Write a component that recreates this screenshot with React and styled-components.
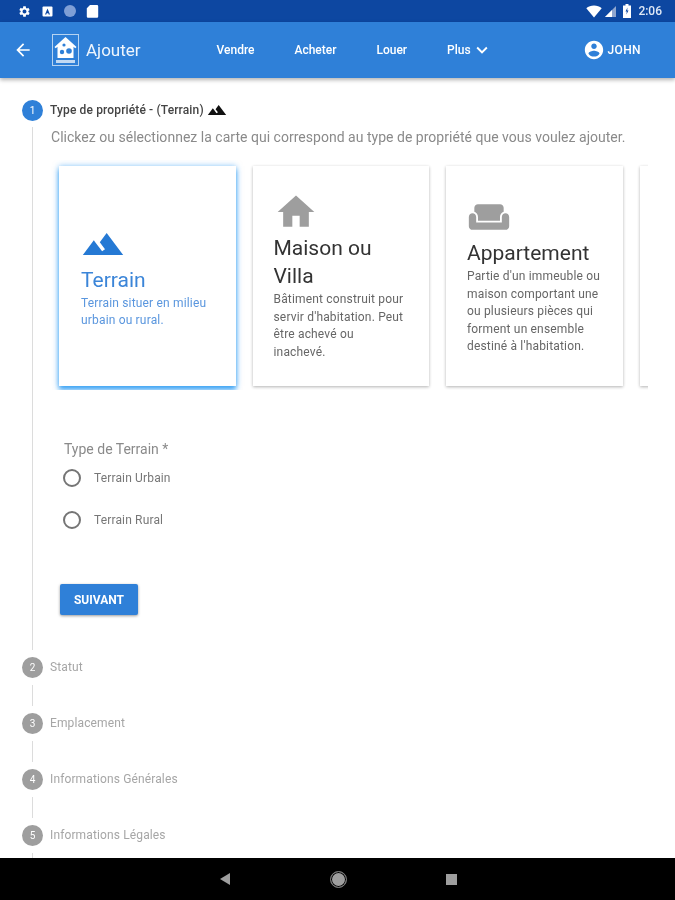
import React from 'react';
import styled, { createGlobalStyle } from 'styled-components';

const BLUE = '#2f80d8';

const GlobalStyle = createGlobalStyle`
	html, body {
		margin: 0;
		padding: 0;
		background: #fff;
	}
	* {
		box-sizing: border-box;
	}
`;

const cards = [
	{
		key: 'terrain',
		title: 'Terrain',
		text: 'Terrain situer en milieu urbain ou rural.',
		icon: 'M14 6l-3.75 5 2.85 3.8-1.6 1.2C9.81 13.75 7 10 7 10l-6 8h22L14 6z',
		selected: true,
	},
	{
		key: 'maison',
		title: 'Maison ou Villa',
		text: "Bâtiment construit pour servir d'habitation. Peut être achevé ou inachevé.",
		icon: 'M10 20v-6h4v6h5v-8h3L12 3 2 12h3v8z',
	},
	{
		key: 'appartement',
		title: 'Appartement',
		text: "Partie d'un immeuble ou maison comportant une ou plusieurs pièces qui forment un ensemble destiné à l'habitation.",
		icon: 'M21 10c-1.1 0-2 .9-2 2v3H5v-3c0-1.1-.9-2-2-2s-2 .9-2 2v5c0 1.1.9 2 2 2h18c1.1 0 2-.9 2-2v-5c0-1.1-.9-2-2-2zm-3-5H6c-1.1 0-2 .9-2 2v2.15c1.16.41 2 1.52 2 2.81V14h12v-2.03c0-1.3.84-2.4 2-2.81V7c0-1.1-.9-2-2-2z',
	},
];

const pendingSteps = ['Statut', 'Emplacement', 'Informations Générales', 'Informations Légales'];

export default function App() {
	return (
		<Screen>
			<GlobalStyle />
			{/* Android status bar */}
			<StatusBar>
				<StatusGroup>
					<svg width="13" height="13" viewBox="0 0 24 24" fill="#fff">
						<path d="M19.14 12.94c.04-.3.06-.61.06-.94 0-.32-.02-.64-.07-.94l2.03-1.58c.18-.14.23-.41.12-.61l-1.92-3.32c-.12-.22-.37-.29-.59-.22l-2.39.96c-.5-.38-1.03-.7-1.62-.94l-.36-2.54c-.04-.24-.24-.41-.48-.41h-3.84c-.24 0-.43.17-.47.41l-.36 2.54c-.59.24-1.13.57-1.62.94l-2.39-.96c-.22-.08-.47 0-.59.22L2.74 8.87c-.12.21-.08.47.12.61l2.03 1.58c-.05.3-.09.63-.09.94s.02.64.07.94l-2.03 1.58c-.18.14-.23.41-.12.61l1.92 3.32c.12.22.37.29.59.22l2.39-.96c.5.38 1.03.7 1.62.94l.36 2.54c.05.24.24.41.48.41h3.84c.24 0 .44-.17.47-.41l.36-2.54c.59-.24 1.13-.56 1.62-.94l2.39.96c.22.08.47 0 .59-.22l1.92-3.32c.12-.22.07-.47-.12-.61l-2.01-1.58zM12 15.6c-1.98 0-3.6-1.62-3.6-3.6s1.62-3.6 3.6-3.6 3.6 1.62 3.6 3.6-1.62 3.6-3.6 3.6z" />
					</svg>
					<svg width="13" height="13" viewBox="0 0 13 13">
						<rect x="1.5" y="1.5" width="10" height="10" rx="1" fill="#fff" />
						<path d="M6.5 3.5L4 9.5h1.3l.4-1.2h1.6l.4 1.2H9L6.5 3.5z" fill="#0d47a1" />
					</svg>
					<StatusDot />
					<svg width="13" height="14" viewBox="0 0 13 14" fill="#fff">
						<path d="M4 1h7a1.2 1.2 0 0 1 1.2 1.2v10.4A1.2 1.2 0 0 1 11 13.8H2A1.2 1.2 0 0 1 .8 12.6V4.2L4 1z" />
					</svg>
				</StatusGroup>
				<StatusGroup right>
					<svg width="16" height="13" viewBox="0 0 16 13" fill="#fff">
						<path d="M8 12.5L.3 3.2C2.4 1.4 5 .5 8 .5s5.6.9 7.700 2.7L8 12.500z" />
					</svg>
					<svg width="11" height="11" viewBox="0 0 11 11">
						<path d="M11 0v11H0L11 0z" fill="#8fa6cf" />
						<path d="M7 4v7H0l7-7z" fill="#fff" />
					</svg>
					<BatteryIcon width="8" height="14" viewBox="0 0 8 14">
						<path d="M2.5 0h3v1.500H8V14H0V1.500h2.500V0z" fill="#fff" />
						<path d="M4.500 3.500L2.500 7.500h1.300l-.4 3 2.100-4H4.200l.3-3z" fill="#0d47a1" />
					</BatteryIcon>
					<StatusTime>2:06</StatusTime>
				</StatusGroup>
			</StatusBar>

			{/* App bar */}
			<AppBar>
				<BackButton>
					<svg width="20" height="20" viewBox="0 0 24 24" fill="#fff">
						<path d="M20 11H7.83l5.59-5.59L12 4l-8 8 8 8 1.41-1.41L7.83 13H20v-2z" />
					</svg>
				</BackButton>
				<Logo>
					<svg width="25" height="30" viewBox="0 0 25 30">
						<path d="M12.500 2L1.500 12l1.200 1.300 1.800-1.600V23h16V11.700l1.800 1.600 1.200-1.300L12.500 2z" fill="#fff" />
						<circle cx="11" cy="10" r="1.600" fill={BLUE} />
						<circle cx="16" cy="16" r="2.800" fill={BLUE} />
						<circle cx="9" cy="17" r="2.200" fill={BLUE} />
						<rect x="3" y="25" width="19" height="3" fill="#fff" opacity="0.7" />
					</svg>
				</Logo>
				<PageTitle>Ajouter</PageTitle>
				<Nav>
					<NavItem>Vendre</NavItem>
					<NavItem>Acheter</NavItem>
					<NavItem>Louer</NavItem>
					<NavItem>
						Plus
						<svg width="22" height="22" viewBox="0 0 24 24" fill="#fff">
							<path d="M7.41 8.59L12 13.17l4.59-4.58L18 10l-6 6-6-6 1.41-1.41z" />
						</svg>
					</NavItem>
				</Nav>
				<UserMenu>
					<svg width="22" height="22" viewBox="0 0 24 24" fill="#fff">
						<path d="M12 2C6.48 2 2 6.48 2 12s4.48 10 10 10 10-4.48 10-10S17.52 2 12 2zm0 3c1.66 0 3 1.34 3 3s-1.34 3-3 3-3-1.34-3-3 1.34-3 3-3zm0 14.2c-2.5 0-4.71-1.28-6-3.22.03-1.99 4-3.08 6-3.08 1.99 0 5.97 1.09 6 3.08-1.29 1.94-3.5 3.22-6 3.22z" />
					</svg>
					JOHN
				</UserMenu>
			</AppBar>

			{/* Stepper */}
			<Main>
				<StepHeader>
					<StepNumber active>1</StepNumber>
					<ActiveLabel>
						Type de propriété - (Terrain)
						<svg width="20" height="20" viewBox="0 0 24 24" fill="#111">
							<path d={cards[0].icon} />
						</svg>
					</ActiveLabel>
				</StepHeader>
				<StepBody>
					<Intro>Clickez ou sélectionnez la carte qui correspond au type de propriété que vous voulez ajouter.</Intro>
					<CardRow>
						{cards.map((card) => (
							<Card key={card.key} selected={card.selected}>
								<CardIcon selected={card.selected} viewBox="0 0 24 24">
									<path d={card.icon} />
								</CardIcon>
								<CardTitle selected={card.selected}>{card.title}</CardTitle>
								<CardText selected={card.selected}>{card.text}</CardText>
							</Card>
						))}
						<Card />
					</CardRow>
					<FieldLabel>Type de Terrain *</FieldLabel>
					<RadioRow>
						<RadioCircle />
						Terrain Urbain
					</RadioRow>
					<RadioRow>
						<RadioCircle />
						Terrain Rural
					</RadioRow>
					<NextButton>SUIVANT</NextButton>
				</StepBody>
				{pendingSteps.map((label, i) => (
					<React.Fragment key={label}>
						<StepHeader>
							<StepNumber>{i + 2}</StepNumber>
							<PendingLabel>{label}</PendingLabel>
						</StepHeader>
						<Connector />
					</React.Fragment>
				))}
			</Main>

			{/* Android navigation bar */}
			<BottomBar>
				<svg width="12" height="14" viewBox="0 0 12 14" fill="#9e9e9e">
					<path d="M11 1v12L1 7l10-6z" />
				</svg>
				<HomeButton />
				<SquareButton />
			</BottomBar>
		</Screen>
	);
}

const Screen = styled.div`
	width: 675px;
	height: 900px;
	display: flex;
	flex-direction: column;
	overflow: hidden;
	background: #fff;
	font-family: Roboto, 'Liberation Sans', sans-serif;
	filter: blur(0.4px);
`;

const StatusBar = styled.div`
	height: 22px;
	flex-shrink: 0;
	display: flex;
	align-items: center;
	justify-content: space-between;
	padding: 0 13px 0 18px;
	background: #0d47a1;
`;

const StatusGroup = styled.div`
	display: flex;
	align-items: center;
	gap: ${(p) => (p.right ? '3px' : '10px')};
`;

const BatteryIcon = styled.svg`
	margin-left: 4px;
`;

const StatusDot = styled.span`
	width: 12px;
	height: 12px;
	border-radius: 50%;
	background: #7f9fd6;
`;

const StatusTime = styled.span`
	margin-left: 4px;
	font-size: 12px;
	font-weight: 500;
	color: #dfe8f6;
`;

const AppBar = styled.header`
	position: relative;
	z-index: 2;
	height: 56px;
	flex-shrink: 0;
	display: flex;
	align-items: center;
	padding: 0 34px 0 13px;
	background: ${BLUE};
	color: #fff;
	box-shadow: 0 2px 4px rgba(0, 0, 0, 0.3);
`;

const BackButton = styled.div`
	display: flex;
	width: 20px;
	margin-right: 19px;
`;

const Logo = styled.div`
	width: 27px;
	height: 32px;
	display: flex;
	border: 1px solid rgba(255, 255, 255, 0.65);
`;

const PageTitle = styled.div`
	margin-left: 7px;
	font-size: 17px;
	color: #eef5fd;
`;

const Nav = styled.nav`
	display: flex;
	align-items: center;
	gap: 40px;
	margin-left: 76px;
`;

const NavItem = styled.div`
	display: flex;
	align-items: center;
	font-size: 12px;
	font-weight: 500;
`;

const UserMenu = styled.div`
	display: flex;
	align-items: center;
	gap: 2px;
	margin-left: auto;
	font-size: 12px;
	font-weight: 500;
	letter-spacing: 0.4px;
`;

const Main = styled.main`
	flex: 1;
	min-height: 0;
	overflow: hidden;
	padding: 22px 0 0 22px;
`;

const StepHeader = styled.div`
	display: flex;
	align-items: center;
	gap: 7px;
	height: 21px;
`;

const StepNumber = styled.div`
	width: 21px;
	height: 21px;
	flex-shrink: 0;
	display: flex;
	align-items: center;
	justify-content: center;
	border-radius: 50%;
	font-size: 10px;
	color: #fff;
	background: ${(p) => (p.active ? BLUE : '#9e9e9e')};
`;

const ActiveLabel = styled.div`
	display: flex;
	align-items: center;
	gap: 3px;
	padding-bottom: 2px;
	font-size: 12px;
	font-weight: 500;
	letter-spacing: 0.14px;
	color: #444;
`;

const PendingLabel = styled.div`
	padding-bottom: 1px;
	font-size: 12px;
	letter-spacing: 0.13px;
	color: #a6a6a6;
`;

const StepBody = styled.section`
	height: 523px;
	margin: 6px 0 7px 10px;
	padding: 3px 0 0 18px;
	border-left: 1px solid #dcdcdc;
`;

const Connector = styled.div`
	height: 21px;
	margin: 7px 0 7px 10px;
	border-left: 1px solid #dcdcdc;
`;

const Intro = styled.p`
	margin: 0;
	font-size: 14px;
	line-height: 15px;
	letter-spacing: 0.02px;
	color: #8a8a8a;
`;

const CardRow = styled.div`
	width: 597px;
	height: 230px;
	margin-top: 15px;
	padding: 6px 0 0 8px;
	display: flex;
	gap: 17px;
	overflow: hidden;
`;

const Card = styled.article`
	width: 176.5px;
	height: 220px;
	flex-shrink: 0;
	display: flex;
	flex-direction: column;
	justify-content: center;
	padding: 0 21px 1px ${(p) => (p.selected ? '22px' : '21px')};
	background: #fff;
	box-shadow: ${(p) =>
		p.selected
			? '0 4px 5px rgba(33, 150, 243, 0.8), 0 0 6px rgba(33, 150, 243, 0.5)'
			: '0 1px 3px rgba(0, 0, 0, 0.3)'};
`;

const CardIcon = styled.svg`
	width: 44px;
	height: 44px;
	flex-shrink: 0;
	fill: ${(p) => (p.selected ? '#2579d4' : '#9e9e9e')};
`;

const CardTitle = styled.h3`
	margin: 0;
	font-size: 21px;
	font-weight: 400;
	line-height: 28px;
	color: ${(p) => (p.selected ? '#3b85d8' : '#333')};
`;

const CardText = styled.p`
	margin: 1px 0 0;
	font-size: 12px;
	line-height: 17.5px;
	letter-spacing: 0.17px;
	color: ${(p) => (p.selected ? '#5a96de' : '#666')};
`;

const FieldLabel = styled.div`
	margin: 51px 0 0 13px;
	font-size: 14px;
	line-height: 16px;
	color: #8a8a8a;
`;

const RadioRow = styled.label`
	display: flex;
	align-items: center;
	gap: 13px;
	height: 18px;
	margin: 12px 0 0 12px;
	font-size: 12px;
	letter-spacing: 0.15px;
	color: #777;
	& + & {
		margin-top: 24px;
	}
`;

const RadioCircle = styled.span`
	width: 18px;
	height: 18px;
	flex-shrink: 0;
	border: 2px solid #757575;
	border-radius: 50%;
`;

const NextButton = styled.button`
	display: block;
	width: 78px;
	height: 31px;
	margin: 55px 0 0 9px;
	padding: 0;
	border: 0;
	border-radius: 2px;
	background: ${BLUE};
	color: #fff;
	font-family: inherit;
	font-size: 12px;
	font-weight: 700;
	box-shadow: 0 1px 3px rgba(0, 0, 0, 0.4);
`;

const BottomBar = styled.footer`
	height: 42px;
	flex-shrink: 0;
	display: flex;
	align-items: center;
	justify-content: center;
	gap: 99px;
	background: #000;
`;

const HomeButton = styled.span`
	width: 17px;
	height: 17px;
	border-radius: 50%;
	background: #9e9e9e;
	box-shadow: 0 0 0 1px #000 inset, 0 0 0 3px #9e9e9e inset;
	border: 1px solid #777;
`;

const SquareButton = styled.span`
	width: 11px;
	height: 11px;
	background: #9e9e9e;
`;
